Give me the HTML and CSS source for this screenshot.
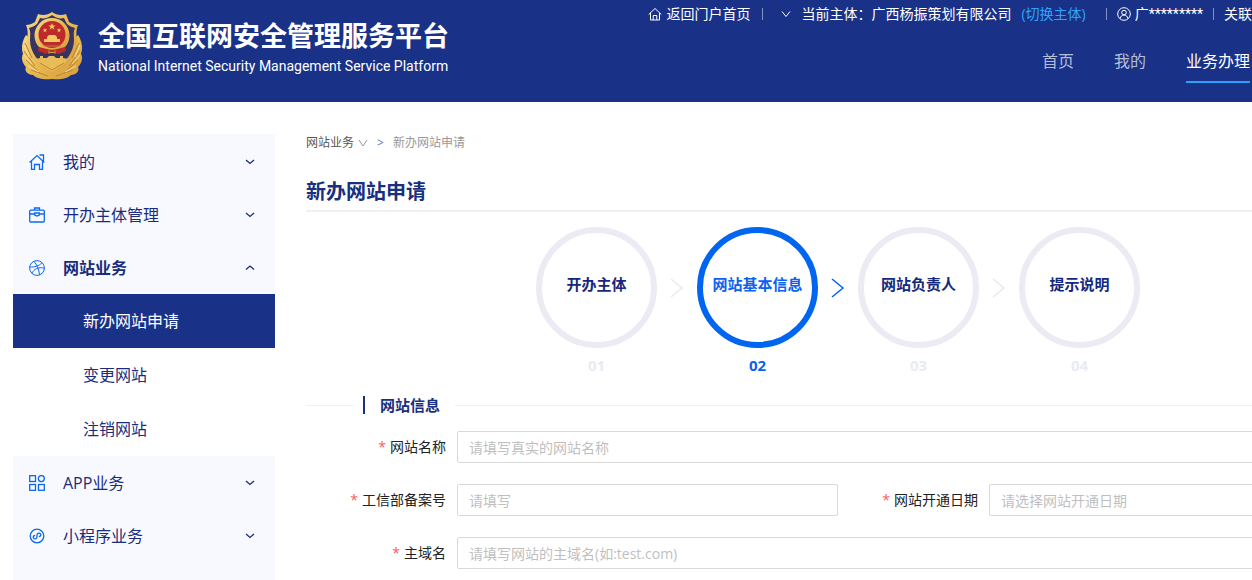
FILE: index.html
```html
<!DOCTYPE html>
<html lang="zh-CN">
<head>
<meta charset="utf-8">
<meta name="viewport" content="width=device-width, initial-scale=1">
<title>全国互联网安全管理服务平台</title>
<link rel="stylesheet" href="styles.css">
</head>
<body>
<header class="header">
  <div class="brand">
    <svg class="emblem" viewBox="0 0 62 68" aria-hidden="true">
      <defs>
        <linearGradient id="gold" x1="0" y1="0" x2="1" y2="1">
          <stop offset="0" stop-color="#f6d98c"/><stop offset=".5" stop-color="#e9b94f"/><stop offset="1" stop-color="#d49a3c"/>
        </linearGradient>
      </defs>
      <path fill="url(#gold)" d="M5 23C1 29 0 36 2 42c-2 3-1 9 3 13-2 4 2 8 7 8 4 4 12 5 19 4 7 1 15 0 19-4 5 0 9-4 7-8 4-4 5-10 3-13 2-6 1-13-3-19l-8 8H13z"/>
      <path fill="url(#gold)" d="M31 0c4 3 9 4 14 2l3 8c3 2 6 3 9 3-2 5-2 9-1 14 1 15-9 28-25 36C15 55 5 42 6 27c1-5 1-9-1-14 3 0 6-1 9-3l3-8c5 2 10 1 14-2z"/>
      <path fill="#37345f" d="M31 3c4 3 8 4 12 3l3 6c2 2 5 3 8 4-2 4-1 8-1 12 0 12-8 23-22 30C17 51 9 40 9 28c0-4 1-8-1-12 3-1 6-2 8-4l3-6c4 1 8 0 12-3z"/>
      <circle cx="31" cy="23.500" r="17.500" fill="url(#gold)"/>
      <circle cx="31" cy="22.500" r="13.500" fill="#be2a2c"/>
      <path fill="#f3ca5d" d="m31 11 1 2.500h2.700l-2.200 1.600.8 2.600-2.300-1.600-2.300 1.600.8-2.600-2.200-1.600H30zM24 16l.7 1.500h1.600L25 18.600l.4 1.600-1.400-1-1.400 1 .4-1.600-1.300-1.100h1.600zM38 16l.7 1.500h1.600L39 18.600l.4 1.600-1.400-1-1.400 1 .4-1.600-1.300-1.100h1.600zM26 25l2-2h6l2 2v2h3v3H23v-3h3z"/>
      <path fill="#be2a2c" d="m18 35 8 2c3 1 7 1 10 0l8-2 1 4-8 3-3-2h-6l-3 2-8-3z"/>
      <path stroke="#b98534" fill="none" d="M22 34h18M28 38v4m6-4v4"/>
      <path fill="#e8bc58" d="M15 47l4-1v-2h3v2h4l2-2h5l2 2h4v-2h3v2l5 1-4 5-12 8-12-8z"/>
      <path stroke="#b98534" fill="none" d="M4 31l7 15M3 39l11 15M5 48l14 13M10 58l17 6M58 31l-7 15M59 39 48 54M57 48 43 61M52 58l-17 6M19 51l12 7 12-7"/>
      <path stroke="#f9df99" fill="none" d="M3 33l5 12M3 43l8 9M7 54l11 6M59 33l-5 12M59 43l-8 9M55 54l-11 6"/>
    </svg>
    <div class="brand-text">
      <h1 class="brand-title">全国互联网安全管理服务平台</h1>
      <p class="brand-subtitle">National Internet Security Management Service Platform</p>
    </div>
  </div>
  <div class="header-side">
    <div class="toolbar">
      <a class="tool portal" href="#"><svg class="icon-tool" viewBox="0 0 14 14" aria-hidden="true"><path d="M.7 7.500 7 1.500l6.300 6M2.500 6v7h9V6M5.200 13V8.500h3.600V13"/></svg>返回门户首页</a>
      <span class="separator"></span>
      <button class="tool subject" type="button"><svg class="icon-caret" viewBox="0 0 10 10" aria-hidden="true"><path d="m1 2.500 4 5 4-5"/></svg>当前主体：广西杨振策划有限公司</button>
      <a class="switch" href="#">(切换主体)</a>
      <span class="separator"></span>
      <a class="tool account" href="#"><svg class="icon-tool" viewBox="0 0 14 14" aria-hidden="true"><circle cx="7" cy="7" r="6.300"/><circle cx="7" cy="5.600" r="2.300"/><path d="M3.200 11.500c.5-4.600 7.100-4.600 7.600 0"/></svg>广*********</a>
      <span class="separator"></span>
      <a class="tool" href="#">关联</a>
    </div>
    <nav class="nav">
      <a class="nav-link" href="#">首页</a>
      <a class="nav-link" href="#">我的</a>
      <a class="nav-link nav-link-active" href="#">业务办理</a>
    </nav>
  </div>
</header>

<div class="layout">
  <aside class="sidebar">
    <button class="menu-item" type="button">
      <svg class="menu-icon" viewBox="0 0 16 16" aria-hidden="true"><path d="M.6 8.500 8 1.600l7.400 6.900M10.500 1h4v6M2.500 7.500v8h3v-5h5v5h3v-8"/></svg>
      <span class="menu-label">我的</span>
      <svg class="menu-caret" viewBox="0 0 10 10" aria-hidden="true"><path d="m1 3 4 3.500L9 3"/></svg>
    </button>
    <button class="menu-item" type="button">
      <svg class="menu-icon" viewBox="0 0 16 16" aria-hidden="true"><rect x=".7" y="3.200" width="14.600" height="11.800" rx="1"/><path d="M5.500 3V1h5v2M1 7h4.700M10.300 7H15M5.700 6h4.600v2L8 9 5.700 8z"/></svg>
      <span class="menu-label">开办主体管理</span>
      <svg class="menu-caret" viewBox="0 0 10 10" aria-hidden="true"><path d="m1 3 4 3.500L9 3"/></svg>
    </button>
    <button class="menu-item menu-item-open" type="button">
      <svg class="menu-icon menu-icon-light" viewBox="0 0 16 16" aria-hidden="true"><circle cx="8" cy="8" r="7.400"/><path d="M5 1.300c3 3.500 5 8 5.500 13.500M.7 7c5 .3 9-.8 12.300-4.300M2.800 13.300c2.400-4.600 7-6.700 12.500-5"/></svg>
      <span class="menu-label">网站业务</span>
      <svg class="menu-caret" viewBox="0 0 10 10" aria-hidden="true"><path d="m1 6.500 4-3.500 4 3.500"/></svg>
    </button>
    <div class="submenu">
      <a class="submenu-item submenu-item-active" href="#">新办网站申请</a>
      <a class="submenu-item" href="#">变更网站</a>
      <a class="submenu-item" href="#">注销网站</a>
    </div>
    <button class="menu-item" type="button">
      <svg class="menu-icon" viewBox="0 0 16 16" aria-hidden="true"><rect x=".7" y=".7" width="5.800" height="5.800"/><circle cx="12.300" cy="3.600" r="3"/><rect x=".7" y="9.500" width="5.800" height="5.800"/><rect x="9.500" y="9.500" width="5.800" height="5.800"/></svg>
      <span class="menu-label">APP业务</span>
      <svg class="menu-caret" viewBox="0 0 10 10" aria-hidden="true"><path d="m1 3 4 3.500L9 3"/></svg>
    </button>
    <button class="menu-item" type="button">
      <svg class="menu-icon" viewBox="0 0 16 16" aria-hidden="true"><circle cx="8" cy="8" r="6.800"/><path d="M9.800 8.500c1.600 0 2.300-1 1.900-2.200C11.200 4.500 8 4.600 8 7v2c0 2.400-3.200 2.500-3.700.7C3.900 8.500 4.600 7.500 6.200 7.500"/></svg>
      <span class="menu-label">小程序业务</span>
      <svg class="menu-caret" viewBox="0 0 10 10" aria-hidden="true"><path d="m1 3 4 3.500L9 3"/></svg>
    </button>
  </aside>

  <main class="main">
    <nav class="breadcrumb">
      <a class="crumb" href="#">网站业务<svg class="icon-caret" viewBox="0 0 10 10" aria-hidden="true"><path d="m1 2 4 6 4-6"/></svg></a>
      <span class="crumb-arrow">&gt;</span>
      <span>新办网站申请</span>
    </nav>
    <h2 class="page-title">新办网站申请</h2>

    <ol class="steps">
      <li class="step"><span class="step-circle">开办主体</span><span class="step-number">01</span></li>
      <li class="step-arrow"><svg viewBox="0 0 14 20" aria-hidden="true"><path d="m1 1 11 9-11 9"/></svg></li>
      <li class="step step-current"><span class="step-circle">网站基本信息</span><span class="step-number">02</span></li>
      <li class="step-arrow step-arrow-current"><svg viewBox="0 0 14 20" aria-hidden="true"><path d="m1 1 11 9-11 9"/></svg></li>
      <li class="step"><span class="step-circle">网站负责人</span><span class="step-number">03</span></li>
      <li class="step-arrow"><svg viewBox="0 0 14 20" aria-hidden="true"><path d="m1 1 11 9-11 9"/></svg></li>
      <li class="step"><span class="step-circle">提示说明</span><span class="step-number">04</span></li>
    </ol>

    <h3 class="section-title"><span class="section-name">网站信息</span></h3>

    <form class="form">
      <label class="label" for="site-name"><span class="required">*</span>网站名称</label>
      <input class="input input-wide" id="site-name" type="text" placeholder="请填写真实的网站名称">
      <label class="label" for="record-no"><span class="required">*</span>工信部备案号</label>
      <input class="input" id="record-no" type="text" placeholder="请填写">
      <label class="label" for="open-date"><span class="required">*</span>网站开通日期</label>
      <input class="input" id="open-date" type="text" placeholder="请选择网站开通日期">
      <label class="label" for="domain"><span class="required">*</span>主域名</label>
      <input class="input input-wide" id="domain" type="text" placeholder="请填写网站的主域名(如:test.com)">
    </form>
  </main>
</div>
</body>
</html>
```
FILE: styles.css
```css
* {
  box-sizing: border-box;
}

body {
  display: flex;
  flex-direction: column;
  min-height: 100vh;
  margin: 0;
  overflow-x: hidden;
  background: #fff;
  color: #222;
  font-family: "Open Sans", "Noto Sans CJK SC", sans-serif;
  font-size: 14px;
  line-height: 20px;
  white-space: nowrap;
}

a {
  color: inherit;
  text-decoration: none;
}

button {
  padding: 0;
  border: 0;
  background: none;
  color: inherit;
  font: inherit;
  cursor: pointer;
}

svg {
  display: block;
  flex: none;
  fill: none;
  stroke: currentColor;
}

.emblem {
  width: 62px;
  height: 68px;
  stroke: none;
}

.header {
  display: flex;
  flex: none;
  justify-content: space-between;
  height: 102px;
  padding-left: 21px;
  background: #193287;
  color: #fff;
}

.brand {
  display: flex;
  align-items: flex-start;
  gap: 15px;
  padding-top: 12px;
}

.brand-title {
  margin: 5px 0 0;
  font-size: 27px;
  line-height: 38px;
}

.brand-subtitle {
  margin: 0;
  font-family: Roboto, "Open Sans", sans-serif;
  font-size: 14px;
  line-height: 22px;
}

.header-side {
  display: flex;
  flex-direction: column;
  align-items: flex-end;
  padding-top: 4px;
}

.toolbar {
  display: flex;
  align-items: center;
}

.tool {
  display: flex;
  align-items: center;
  gap: 4px;
}

.portal {
  margin-right: 2px;
}

.subject {
  gap: 10px;
  margin-left: 8px;
}

.account {
  font-family: Roboto, "Noto Sans CJK SC", sans-serif;
}

.icon-tool {
  width: 14px;
  height: 14px;
}

.icon-caret {
  width: 10px;
  height: 10px;
}

.switch {
  margin: 0 10px;
  color: #2fa4ff;
}

.separator {
  width: 1px;
  height: 12px;
  margin: 0 10px;
  background: #8390c0;
}

.nav {
  display: flex;
  gap: 40px;
  padding: 24px 2px 0 0;
  font-size: 16px;
  line-height: 26px;
}

.nav-link {
  height: 35px;
  color: #b5bdd9;
}

.nav-link-active {
  border-bottom: 2px solid #27a3fb;
  color: #fff;
}

.layout {
  display: flex;
  flex: 1;
  gap: 31px;
  min-width: 1383px;
  padding: 32px 13px 0;
}

.sidebar {
  flex: none;
  width: 262px;
  padding-top: 1px;
  background: #f8f9fe;
  color: #1a2c7b;
  font-size: 16px;
}

.menu-item {
  display: flex;
  align-items: center;
  width: 100%;
  height: 53px;
  padding: 0 20px 0 16px;
  text-align: left;
}

.menu-item-open {
  font-weight: 700;
}

.menu-icon {
  width: 16px;
  height: 16px;
  margin-right: 18px;
  color: #0b69ef;
  stroke-width: 1.3;
}

.menu-icon-light {
  stroke-width: 1;
}

.menu-label {
  flex: 1;
}

.menu-caret {
  width: 10px;
  height: 10px;
  stroke-width: 1.3;
}

.submenu {
  background: #fff;
}

.submenu-item {
  display: flex;
  align-items: center;
  height: 54px;
  padding-left: 70px;
}

.submenu-item-active {
  background: #193287;
  color: #fff;
}

.main {
  flex: 1;
}

.breadcrumb {
  display: flex;
  align-items: center;
  gap: 9px;
  height: 18px;
  color: #999;
  font-size: 12px;
}

.crumb {
  display: flex;
  align-items: center;
  gap: 4px;
  color: #555;
}

.crumb .icon-caret {
  color: #999;
}

.crumb-arrow {
  color: #5c78bd;
}

.page-title {
  margin: 25px 0 15px;
  padding-bottom: 3px;
  border-bottom: 2px solid #f0f0f0;
  color: #17307f;
  font-size: 20px;
  line-height: 30px;
}

.steps {
  display: flex;
  justify-content: center;
  margin: 0;
  padding: 0;
  color: #15297c;
  font-size: 15px;
  font-weight: 700;
  list-style: none;
}

.step {
  display: flex;
  flex-direction: column;
  align-items: center;
  gap: 7px;
}

.step-circle {
  display: flex;
  align-items: center;
  justify-content: center;
  width: 121px;
  height: 121px;
  padding-bottom: 8px;
  border: 6px solid #ebecf3;
  border-radius: 50%;
}

.step-number {
  color: #e8ebf3;
}

.step-current,
.step-current .step-number {
  color: #0a62ee;
}

.step-current .step-circle {
  border-color: #0066f0;
}

.step-arrow {
  display: flex;
  align-items: center;
  justify-content: center;
  width: 40px;
  height: 121px;
  color: #e8e9f1;
}

.step-arrow svg {
  width: 14px;
  height: 20px;
  stroke-width: 1.5;
}

.step-arrow-current {
  color: #0066f0;
}

.section-title {
  display: flex;
  align-items: center;
  gap: 15px;
  margin: 20px 0 16px;
  color: #17307f;
  font-size: 15px;
  line-height: 20px;
}

.section-title::before,
.section-title::after {
  flex: 1;
  height: 1px;
  background: #f0f0f0;
  content: "";
}

.section-title::before {
  flex: none;
  width: 48px;
  margin-right: -6px;
}

.section-name {
  display: flex;
  align-items: center;
  gap: 15px;
}

.section-name::before {
  width: 2px;
  height: 18px;
  background: #17307f;
  content: "";
}

.form {
  display: grid;
  grid-template-columns: 151px 1fr 151px 1fr;
  row-gap: 21px;
  align-items: center;
}

.label {
  padding-right: 11px;
  text-align: right;
}

.required {
  margin-right: 4px;
  color: #ff5a5f;
}

.input {
  width: 100%;
  min-width: 0;
  height: 32px;
  padding: 0 11px;
  border: 1px solid #d9d9d9;
  border-radius: 2px;
  background: #fff;
  color: #222;
  font: inherit;
}

.input::placeholder {
  color: #bfbfbf;
  opacity: 1;
}

.input-wide {
  grid-column: span 3;
}
```
